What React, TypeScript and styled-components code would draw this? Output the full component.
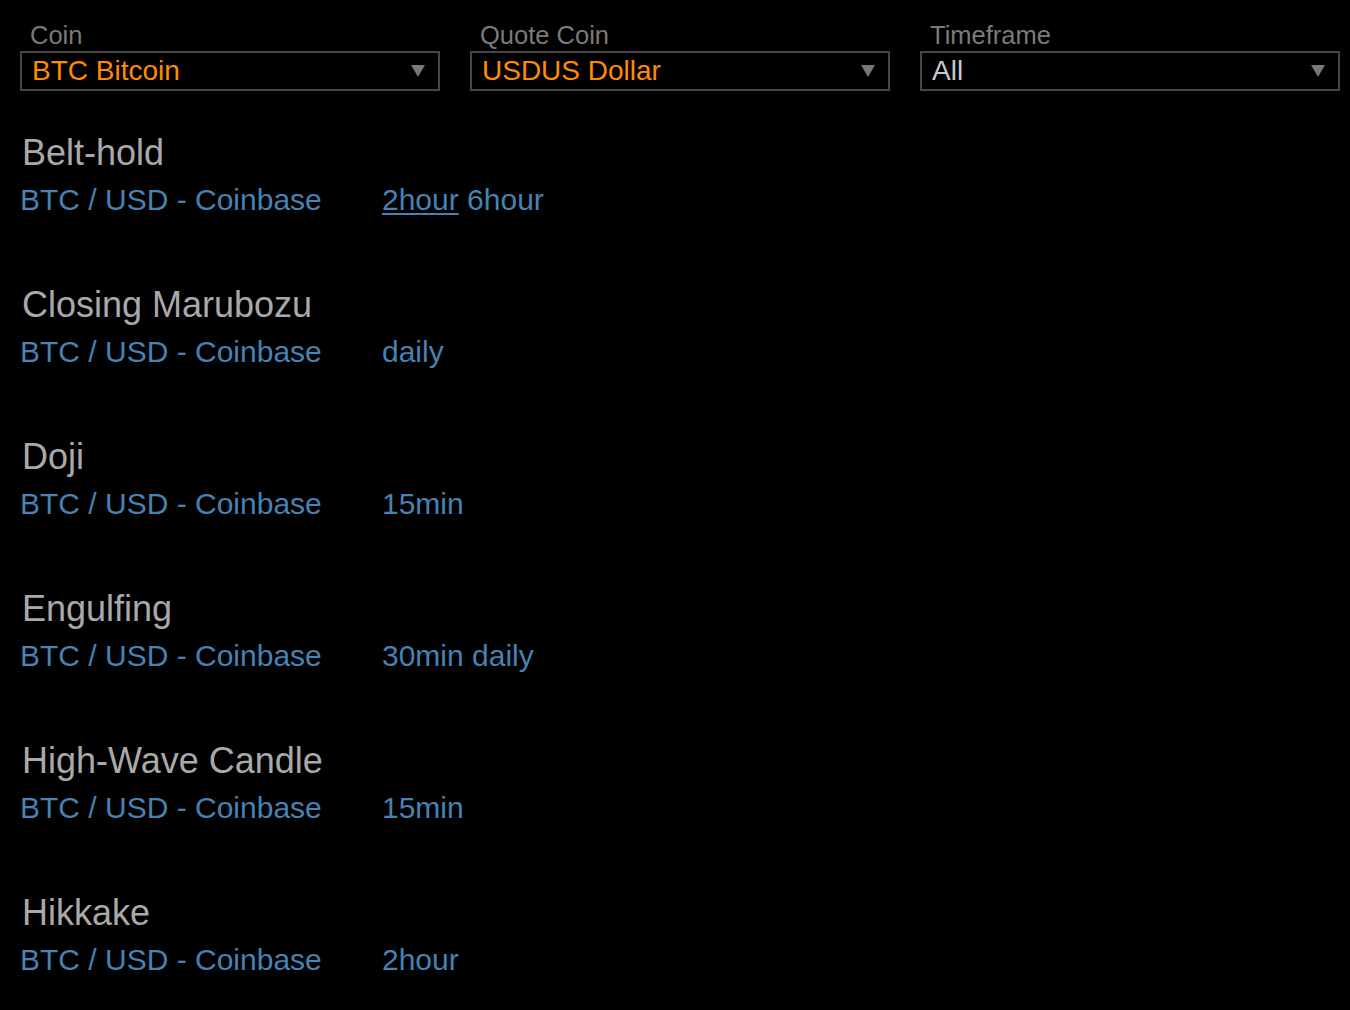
import React from "react";
import styled, { createGlobalStyle } from "styled-components";

const GlobalStyle = createGlobalStyle`
  html, body {
    margin: 0;
    padding: 0;
    background: #000;
    overflow: hidden;
  }
  body {
    font-family: "Liberation Sans", Arial, Helvetica, sans-serif;
  }
  * { box-sizing: border-box; }
`;

const Page = styled.div`
  background: #000;
  padding: 20px 10px 0 20px;
  font-family: "Liberation Sans", Arial, Helvetica, sans-serif;
`;

const Filters = styled.div`
  display: grid;
  grid-template-columns: repeat(3, 1fr);
  column-gap: 30px;
`;

const Field = styled.div`
  display: flex;
  flex-direction: column;
  gap: 1px;
`;

const Label = styled.label`
  font-size: 25.5px;
  line-height: 30px;
  color: #7a7a7a;
  padding-left: 10px;
`;

const SelectBox = styled.div<{ $accent: boolean }>`
  display: flex;
  align-items: center;
  justify-content: space-between;
  height: 40px;
  border: 2px solid #474747;
  background: #000;
  padding: 0 13px 0 10px;
  font-size: 28px;
  line-height: 36px;
  color: ${(p) => (p.$accent ? "#ff8c00" : "#c8c8c8")};
  cursor: pointer;
`;

const Arrow = styled.span`
  width: 0;
  height: 0;
  border-left: 7px solid transparent;
  border-right: 7px solid transparent;
  border-top: 12px solid #777;
`;

const List = styled.div`
  display: flex;
  flex-direction: column;
  gap: 66px;
  margin-top: 41px;
`;

const Pattern = styled.div`
  display: flex;
  flex-direction: column;
  gap: 8px;
`;

const Title = styled.div`
  font-size: 36px;
  line-height: 42px;
  color: #a9a9a9;
  padding-left: 2px;
`;

const Row = styled.div`
  display: grid;
  grid-template-columns: 362px auto;
  font-size: 30px;
  line-height: 36px;
`;

const Link = styled.a<{ $hover?: boolean }>`
  color: #4682b4;
  text-decoration: ${(p) => (p.$hover ? "underline" : "none")};
  text-decoration-thickness: 2px;
  text-underline-offset: 3px;
  &:hover {
    text-decoration: underline;
  }
`;

const Timeframes = styled.div`
  white-space: pre;
`;

type Item = { name: string; frames: string[]; hover?: number };

const items: Item[] = [
  { name: "Belt-hold", frames: ["2hour", "6hour"], hover: 0 },
  { name: "Closing Marubozu", frames: ["daily"] },
  { name: "Doji", frames: ["15min"] },
  { name: "Engulfing", frames: ["30min", "daily"] },
  { name: "High-Wave Candle", frames: ["15min"] },
  { name: "Hikkake", frames: ["2hour"] },
];

const filters = [
  { label: "Coin", value: "BTC Bitcoin", accent: true },
  { label: "Quote Coin", value: "USDUS Dollar", accent: true },
  { label: "Timeframe", value: "All", accent: false },
];

export default function App() {
  return (
    <>
      <GlobalStyle />
      <Page>
        <Filters>
          {filters.map((f) => (
            <Field key={f.label}>
              <Label>{f.label}</Label>
              <SelectBox $accent={f.accent}>
                <span>{f.value}</span>
                <Arrow />
              </SelectBox>
            </Field>
          ))}
        </Filters>
        <List>
          {items.map((it) => (
            <Pattern key={it.name}>
              <Title>{it.name}</Title>
              <Row>
                <Link href="#">BTC / USD - Coinbase</Link>
                <Timeframes>
                  {it.frames.map((fr, i) => (
                    <React.Fragment key={fr}>
                      {i > 0 ? " " : ""}
                      <Link href="#" $hover={it.hover === i}>
                        {fr}
                      </Link>
                    </React.Fragment>
                  ))}
                </Timeframes>
              </Row>
            </Pattern>
          ))}
        </List>
      </Page>
    </>
  );
}
